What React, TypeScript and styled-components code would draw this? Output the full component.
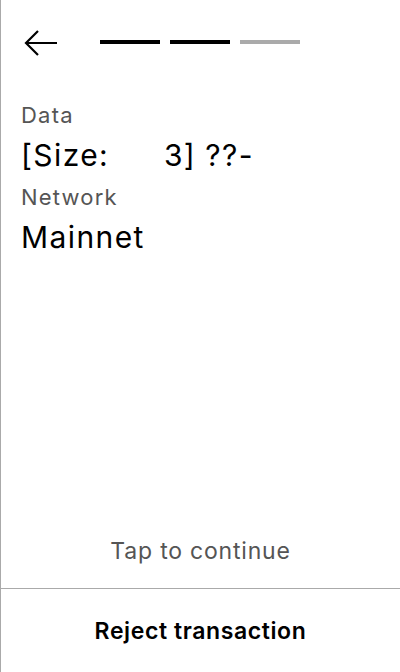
import React from "react";
import styled, { createGlobalStyle } from "styled-components";

const Global = createGlobalStyle`
  html, body { margin: 0; padding: 0; background: #fff; }
  body { font-family: Inter, "Noto Sans", sans-serif; }
`;

const Screen = styled.div`
  box-sizing: border-box;
  width: 400px;
  height: 672px;
  border-left: 1px solid #aaaaaa;
  display: flex;
  flex-direction: column;
  background: #fff;
  color: #000;
`;

const Header = styled.div`
  box-sizing: border-box;
  height: 100px;
  padding: 29px 0 0 23px;
`;

const HeaderRow = styled.div`
  display: flex;
  align-items: center;
  height: 28px;
`;

const BackButton = styled.button`
  border: none;
  background: none;
  padding: 0;
  width: 34px;
  height: 28px;
  display: flex;
  align-items: center;
  cursor: pointer;
`;

const Progress = styled.div`
  display: flex;
  gap: 10px;
  margin-left: 42px;
  margin-bottom: 2px;
`;

const Step = styled.div<{ $done: boolean }>`
  width: 60px;
  height: 4px;
  background: ${(p) => (p.$done ? "#000" : "#aaaaaa")};
`;

const Content = styled.div`
  flex: 1;
  padding: 0 20px;
  display: flex;
  flex-direction: column;
`;

const Label = styled.div`
  font-size: 22px;
  line-height: 30px;
  letter-spacing: 1.2px;
  color: #555555;
  margin-bottom: 5px;
`;

const Value = styled.div`
  font-size: 30px;
  line-height: 40px;
  letter-spacing: 1.4px;
  word-spacing: -0.7px;
  color: #000;
  white-space: pre;
  margin-bottom: 7px;
`;

const Hint = styled.div`
  text-align: center;
  font-size: 23px;
  line-height: 28px;
  letter-spacing: 0.8px;
  color: #555555;
  padding-bottom: 23px;
`;

const Footer = styled.button`
  border: none;
  border-top: 1px solid #aaaaaa;
  background: #fff;
  height: 84px;
  font-family: Inter, "Noto Sans", sans-serif;
  font-size: 23px;
  font-weight: 600;
  letter-spacing: 0.6px;
  color: #000;
  padding: 0;
  cursor: pointer;
`;

const ArrowIcon = () => (
  <svg width="34" height="28" viewBox="0 0 34 28" fill="none">
    <path d="M33 14H2M14 2L2 14l12 12" stroke="#000" strokeWidth="2.2" strokeLinecap="butt" strokeLinejoin="miter" />
  </svg>
);

export default function App() {
  const steps = [true, true, false];
  return (
    <>
      <Global />
      <Screen>
        <Header>
          <HeaderRow>
            <BackButton aria-label="Back">
              <ArrowIcon />
            </BackButton>
            <Progress>
              {steps.map((d, i) => (
                <Step key={i} $done={d} />
              ))}
            </Progress>
          </HeaderRow>
        </Header>
        <Content>
          <Label>Data</Label>
          <Value>{"[Size:      3] ??-"}</Value>
          <Label>Network</Label>
          <Value>Mainnet</Value>
        </Content>
        <Hint>Tap to continue</Hint>
        <Footer>Reject transaction</Footer>
      </Screen>
    </>
  );
}
